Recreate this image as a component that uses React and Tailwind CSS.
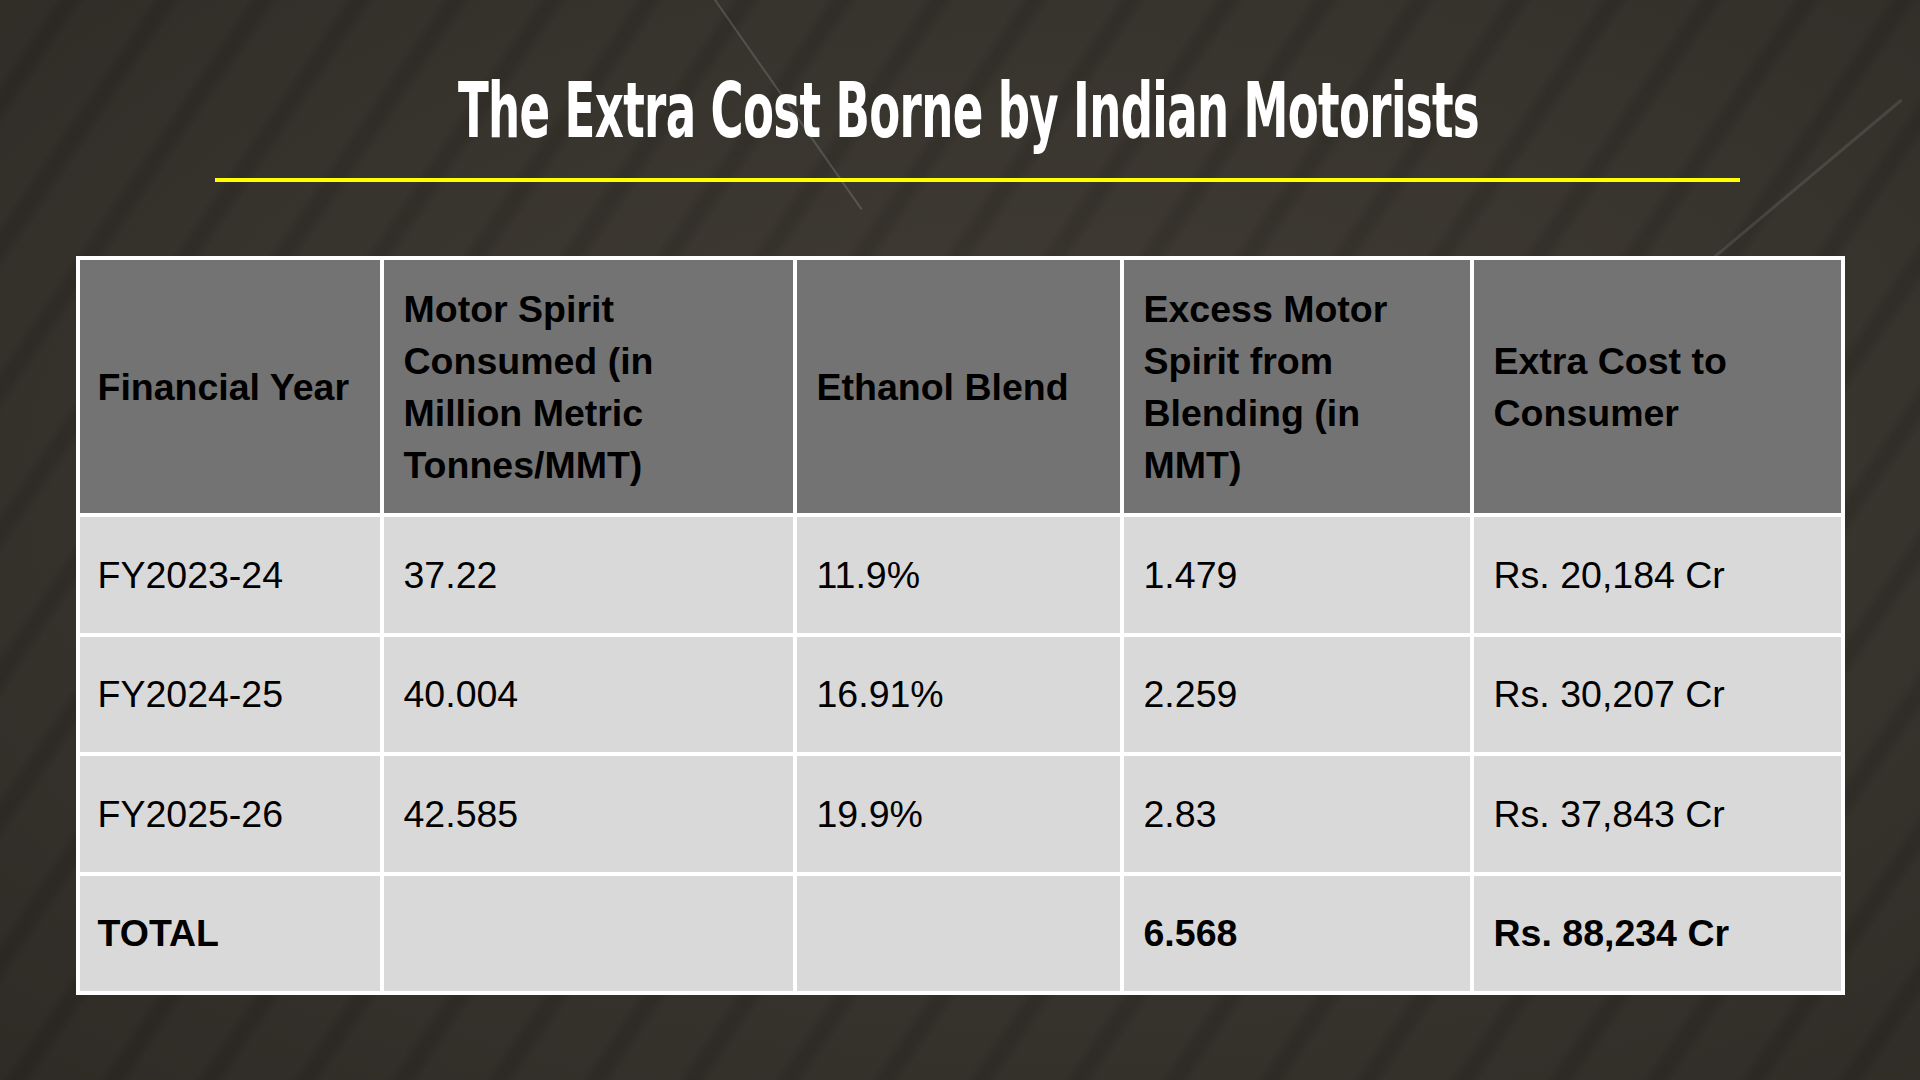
import React from 'react';

const header = [
  ['Financial Year'],
  ['Motor Spirit', 'Consumed (in', 'Million Metric', 'Tonnes/MMT)'],
  ['Ethanol Blend'],
  ['Excess Motor', 'Spirit from', 'Blending (in', 'MMT)'],
  ['Extra Cost to', 'Consumer'],
];

const rows = [
  { h: 'h-[116px]', cells: ['FY2023-24', '37.22', '11.9%', '1.479', 'Rs. 20,184 Cr'] },
  { h: 'h-[115px]', cells: ['FY2024-25', '40.004', '16.91%', '2.259', 'Rs. 30,207 Cr'] },
  { h: 'h-[116px]', cells: ['FY2025-26', '42.585', '19.9%', '2.83', 'Rs. 37,843 Cr'] },
  { h: 'h-[115px]', bold: true, cells: ['TOTAL', '', '', '6.568', 'Rs. 88,234 Cr'] },
];

export default function App() {
  return (
    <div className="relative w-[1920px] h-[1080px] overflow-hidden bg-[#403c35] font-['Liberation_Sans',Arial,sans-serif]">
      {/* paper texture: diagonal print lines + vignette */}
      <div className="absolute inset-0 bg-[repeating-linear-gradient(124deg,rgba(26,23,19,0)_0px,rgba(26,23,19,0)_44px,rgba(26,23,19,0.22)_54px,rgba(26,23,19,0.22)_62px,rgba(26,23,19,0)_72px,rgba(26,23,19,0)_80px)]"></div>
      <div className="absolute inset-0 bg-[radial-gradient(ellipse_at_55%_45%,rgba(80,75,66,0.15),rgba(18,16,13,0.38))]"></div>
      {/* faint scratches */}
      <div className="absolute left-[700px] top-[-20px] w-[2px] h-[280px] bg-white/15 -rotate-[35deg] origin-top"></div>
      <div className="absolute left-[1900px] top-[100px] w-[3px] h-[260px] bg-white/10 rotate-[50deg] origin-top"></div>

      <div className="relative flex flex-col items-center">
        {/* title */}
        <h1 className="mt-[73px] ml-[18px] h-[76px] text-[76px] leading-[76px] font-bold text-white font-['Liberation_Sans_Narrow','DejaVu_Sans_Condensed',sans-serif] tracking-[-1px] scale-x-[0.66] whitespace-nowrap">
          The Extra Cost Borne by Indian Motorists
        </h1>
        <div className="mt-[29px] ml-[34px] w-[1525px] h-[4px] bg-[#ffff00]"></div>

        {/* table */}
        <div className="mt-[74px] w-[1769px] bg-white p-[4px] grid grid-cols-[300px_409px_323px_346px_367px] gap-[4px] text-[37.5px] text-black">
          {header.map((lines, i) => (
            <div key={i} className={`h-[253px] bg-[#737373] flex flex-col justify-center ${i === 0 ? 'pl-[18px]' : 'pl-5'} font-bold leading-[52px]`}>
              {lines.map((l, j) => (
                <span key={j} className="whitespace-nowrap">{l}</span>
              ))}
            </div>
          ))}
          {rows.map((r, ri) =>
            r.cells.map((c, ci) => (
              <div key={ri + '-' + ci} className={`${r.h} bg-[#d9d9d9] flex items-center ${ci === 0 ? 'pl-[18px]' : 'pl-5'} ${r.bold ? 'font-bold' : ''}`}>
                {c}
              </div>
            ))
          )}
        </div>
      </div>
    </div>
  );
}
